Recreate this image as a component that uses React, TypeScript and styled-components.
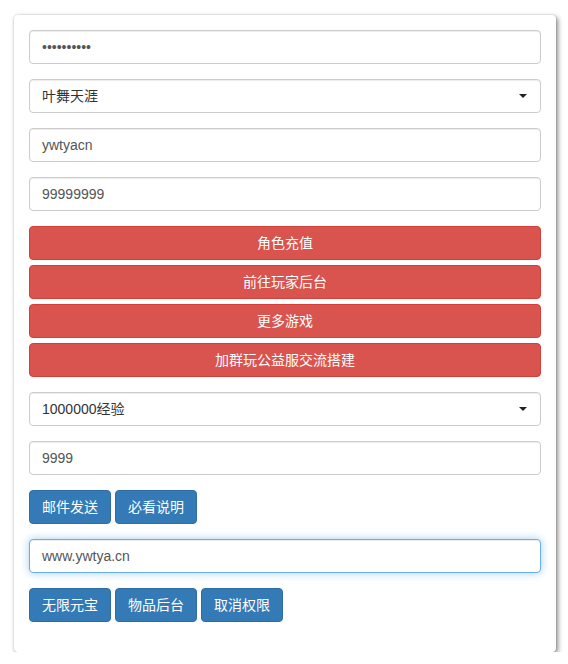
import React from "react";
import styled, { createGlobalStyle } from "styled-components";

const GlobalStyle = createGlobalStyle`
  body {
    margin: 0;
    background: #fff;
    font-family: "Liberation Sans", "Noto Sans CJK SC", Arial, sans-serif;
    font-size: 14px;
    color: #333;
  }
`;

const caret =
  "data:image/svg+xml;utf8,<svg xmlns='http://www.w3.org/2000/svg' width='8' height='4'><path d='M0 0h8L4 4z' fill='%23222'/></svg>";

const goldOptions = ["叶舞天涯"];
const expOptions = ["1000000经验"];
const redButtons = ["角色充值", "前往玩家后台", "更多游戏", "加群玩公益服交流搭建"];

export default function App() {
  return (
    <Page>
      <GlobalStyle />
      <Card>
        <FormGroup>
          <Input type="password" defaultValue="ywtyacn123" readOnly />
        </FormGroup>
        <FormGroup>
          <Select defaultValue={goldOptions[0]}>
            {goldOptions.map((o) => (
              <option key={o}>{o}</option>
            ))}
          </Select>
        </FormGroup>
        <FormGroup>
          <Input defaultValue="ywtyacn" readOnly />
        </FormGroup>
        <FormGroup>
          <Input defaultValue="99999999" readOnly />
        </FormGroup>
        <FormGroup>
          {redButtons.map((label) => (
            <BlockButton key={label}>{label}</BlockButton>
          ))}
        </FormGroup>
        <FormGroup>
          <Select defaultValue={expOptions[0]}>
            {expOptions.map((o) => (
              <option key={o}>{o}</option>
            ))}
          </Select>
        </FormGroup>
        <FormGroup>
          <Input defaultValue="9999" readOnly />
        </FormGroup>
        <FormGroup>
          <ButtonRow>
            <PrimaryButton>邮件发送</PrimaryButton>
            <PrimaryButton>必看说明</PrimaryButton>
          </ButtonRow>
        </FormGroup>
        <FormGroup>
          <Input defaultValue="www.ywtya.cn" readOnly $focused />
        </FormGroup>
        <FormGroup>
          <ButtonRow>
            <PrimaryButton>无限元宝</PrimaryButton>
            <PrimaryButton>物品后台</PrimaryButton>
            <PrimaryButton>取消权限</PrimaryButton>
          </ButtonRow>
        </FormGroup>
      </Card>
    </Page>
  );
}

const Page = styled.div`
  padding: 15px 0 0 14px;
`;

const Card = styled.div`
  box-sizing: border-box;
  width: 542px;
  padding: 15px 15px 15px;
  background: #fff;
  border-radius: 4px;
  box-shadow: 2px 2px 5px rgba(0, 0, 0, 0.45), 0 0 2px rgba(0, 0, 0, 0.2);
`;

const FormGroup = styled.div`
  display: flex;
  flex-direction: column;
  gap: 5px;
  margin-bottom: 15px;
`;

const Input = styled.input<{ $focused?: boolean }>`
  box-sizing: border-box;
  display: block;
  width: 100%;
  height: 34px;
  padding: 6px 12px;
  font-family: inherit;
  font-size: 14px;
  color: #555;
  background: #fff;
  border: 1px solid ${(p) => (p.$focused ? "#66afe9" : "#ccc")};
  border-radius: 4px;
  outline: none;
  box-shadow: ${(p) =>
    p.$focused
      ? "inset 0 1px 1px rgba(0,0,0,.075), 0 0 8px rgba(102,175,233,.6)"
      : "inset 0 1px 1px rgba(0,0,0,.075)"};
`;

const Select = styled.select`
  box-sizing: border-box;
  display: block;
  width: 100%;
  height: 34px;
  padding: 6px 12px;
  font-family: inherit;
  font-size: 14px;
  color: #333;
  border: 1px solid #ccc;
  border-radius: 4px;
  outline: none;
  appearance: none;
  background: #fff url("${caret}") no-repeat right 13px center;
  box-shadow: inset 0 1px 1px rgba(0, 0, 0, 0.075);
`;

const Button = styled.button`
  box-sizing: border-box;
  height: 34px;
  padding: 6px 12px;
  font-family: inherit;
  font-size: 14px;
  line-height: 20px;
  color: #fff;
  border: 1px solid transparent;
  border-radius: 4px;
  cursor: pointer;
`;

const BlockButton = styled(Button)`
  width: 100%;
  background: #d9534f;
  border-color: #d43f3a;
`;

const PrimaryButton = styled(Button)`
  background: #337ab7;
  border-color: #2e6da4;
`;

const ButtonRow = styled.div`
  display: flex;
  gap: 4px;
`;
